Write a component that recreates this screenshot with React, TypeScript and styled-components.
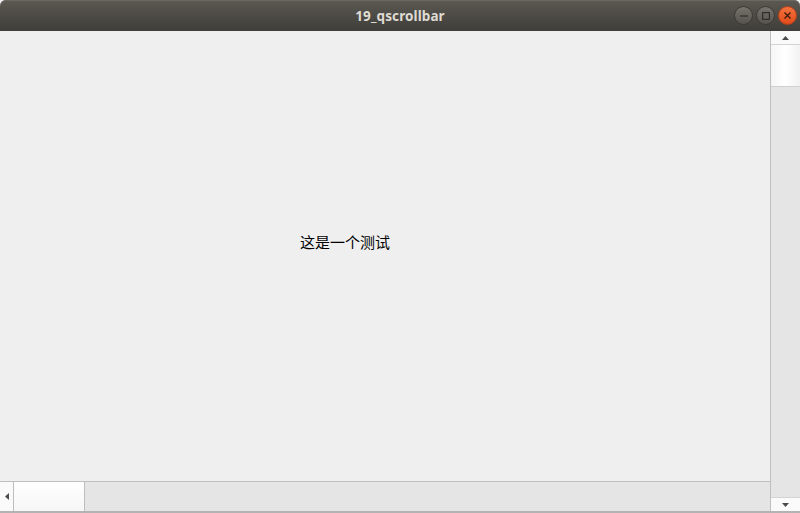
import React from "react";
import styled, { createGlobalStyle } from "styled-components";

const Global = createGlobalStyle`
  html, body { margin: 0; padding: 0; background: #dcdcdc; }
  #root { width: 800px; height: 513px; }
  *, *::before, *::after { box-sizing: border-box; }
`;

const Window = styled.div`
  width: 800px;
  height: 513px;
  display: flex;
  flex-direction: column;
  background: #efefef;
  overflow: hidden;
`;

const TitleBar = styled.div`
  height: 31px;
  flex: none;
  position: relative;
  display: flex;
  align-items: center;
  justify-content: center;
  background: linear-gradient(to bottom, #5c5952 0%, #4a4843 60%, #403e3a 100%);
  border-radius: 6px 6px 0 0;
  box-shadow: inset 0 1px 0 #6b6861;
`;

const Title = styled.span`
  font-family: "Noto Sans", "DejaVu Sans", sans-serif;
  font-weight: 700;
  font-size: 13.5px;
  color: #dfdbd2;
  letter-spacing: 0.1px;
`;

const Controls = styled.div`
  position: absolute;
  right: 3px;
  top: 6px;
  display: flex;
  gap: 3px;
`;

const CircleBtn = styled.div<{ $close?: boolean }>`
  width: 19px;
  height: 19px;
  border-radius: 50%;
  border: 1px solid ${(p) => (p.$close ? "#b8401a" : "#3c3a36")};
  background: ${(p) =>
    p.$close
      ? "linear-gradient(to bottom, #f3733f, #df4b18)"
      : "linear-gradient(to bottom, #76736d, #56534e)"};
  display: flex;
  align-items: center;
  justify-content: center;
`;

const Body = styled.div`
  flex: 1;
  display: flex;
  min-height: 0;
`;

const MainCol = styled.div`
  flex: 1;
  display: flex;
  flex-direction: column;
  min-width: 0;
`;

const Content = styled.div`
  flex: 1;
  background: #efefef;
  padding: 200px 0 0 300px;
`;

const Label = styled.span`
  font-family: "Noto Sans CJK SC", sans-serif;
  font-size: 15px;
  color: #000;
`;

const HBar = styled.div`
  height: 30px;
  flex: none;
  display: flex;
  border-top: 1px solid #bfbfbf;
  background: #e5e5e5;
`;

const VBar = styled.div`
  width: 30px;
  flex: none;
  display: flex;
  flex-direction: column;
  border-left: 1px solid #bfbfbf;
  background: #e5e5e5;
`;

const VButton = styled.div<{ $bottom?: boolean }>`
  height: 14px;
  flex: none;
  background: #fafafa;
  display: flex;
  align-items: center;
  justify-content: center;
  ${(p) => (p.$bottom ? "border-top: 1px solid #d4d4d4;" : "border-bottom: 1px solid #d4d4d4;")}
`;

const HButton = styled.div`
  width: 14px;
  flex: none;
  background: #fafafa;
  display: flex;
  align-items: center;
  justify-content: center;
  border-right: 1px solid #bdbdbd;
`;

const VHandle = styled.div`
  height: 42px;
  flex: none;
  background: linear-gradient(to right, #f6f6f6, #ffffff 50%, #f2f2f2);
  border-bottom: 1px solid #d0d0d0;
`;

const HHandle = styled.div`
  width: 71px;
  flex: none;
  background: linear-gradient(to bottom, #ffffff, #f6f6f6);
  border-right: 1px solid #bdbdbd;
`;

const Track = styled.div`
  flex: 1;
  background: #e5e5e5;
`;

const BottomEdge = styled.div`
  height: 2px;
  flex: none;
  background: #b3b3b3;
`;

const Arrow = ({ dir }: { dir: "up" | "down" | "left" }) => {
  const pts =
    dir === "up" ? "0,4 7,4 3.5,0" : dir === "down" ? "0,0 7,0 3.5,4" : "4,0 4,7 0,3.5";
  const w = dir === "left" ? 4 : 7;
  const h = dir === "left" ? 7 : 4;
  return (
    <svg width={w} height={h} viewBox={`0 0 ${w} ${h}`}>
      <polygon points={pts} fill="#4b4b4b" />
    </svg>
  );
};

export default function App() {
  return (
    <>
      <Global />
      <Window>
        <TitleBar>
          <Title>19_qscrollbar</Title>
          <Controls>
            <CircleBtn>
              <svg width="8" height="2" viewBox="0 0 8 2">
                <rect width="8" height="1.2" y="0.4" fill="#2e2d2a" />
              </svg>
            </CircleBtn>
            <CircleBtn>
              <svg width="8" height="8" viewBox="0 0 8 8">
                <rect x="0.6" y="0.6" width="6.8" height="6.8" fill="none" stroke="#2e2d2a" strokeWidth="1.2" />
              </svg>
            </CircleBtn>
            <CircleBtn $close>
              <svg width="7" height="7" viewBox="0 0 7 7">
                <path d="M0.5 0.5 L6.5 6.5 M6.5 0.5 L0.5 6.5" stroke="#3a1a0c" strokeWidth="1.3" />
              </svg>
            </CircleBtn>
          </Controls>
        </TitleBar>
        <Body>
          <MainCol>
            <Content>
              <Label>这是一个测试</Label>
            </Content>
            <HBar>
              <HButton>
                <Arrow dir="left" />
              </HButton>
              <HHandle />
              <Track />
            </HBar>
          </MainCol>
          <VBar>
            <VButton>
              <Arrow dir="up" />
            </VButton>
            <VHandle />
            <Track />
            <VButton $bottom>
              <Arrow dir="down" />
            </VButton>
          </VBar>
        </Body>
        <BottomEdge />
      </Window>
    </>
  );
}
